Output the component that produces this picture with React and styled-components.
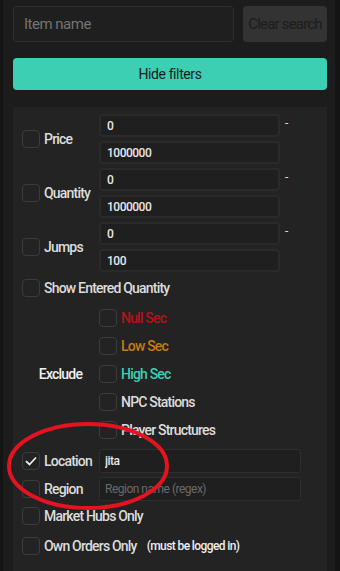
import React from 'react';
import styled, { createGlobalStyle } from 'styled-components';

const GlobalStyle = createGlobalStyle`
  body {
    margin: 0;
    background: #141414;
    font-family: Roboto, "Liberation Sans", sans-serif;
  }
  * { box-sizing: border-box; }
`;

const ranges = [
  { name: 'Price', min: '0', max: '1000000' },
  { name: 'Quantity', min: '0', max: '1000000' },
  { name: 'Jumps', min: '0', max: '100' },
];

const excludes = [
  { name: 'Null Sec', color: '#b3141a' },
  { name: 'Low Sec', color: '#c67a12' },
  { name: 'High Sec', color: '#3ccfb4' },
  { name: 'NPC Stations', color: '#dcdcdc' },
  { name: 'Player Structures', color: '#dcdcdc' },
];

const Check = ({ checked }) => (
  <Box>
    {checked ? (
      <svg width="14" height="14" viewBox="0 0 14 14">
        <path d="M2 7.2 L5.5 10.5 L12 3.5" fill="none" stroke="#eee" strokeWidth="1.8" />
      </svg>
    ) : null}
  </Box>
);

const App = () => {
  return (
    <Page>
      <GlobalStyle />
      <Container>
        <SearchBar>
          <SearchInput placeholder="Item name" />
          <ClearButton>Clear search</ClearButton>
        </SearchBar>
        <FilterButton>Hide filters</FilterButton>
        <Panel>
          {ranges.map((r) => (
            <RangeRow key={r.name}>
              <LabelCell>
                <Check />
                <Label>{r.name}</Label>
              </LabelCell>
              <InputStack>
                <NumInput defaultValue={r.min} />
                <NumInput defaultValue={r.max} />
              </InputStack>
              <Dash>-</Dash>
            </RangeRow>
          ))}
          <CheckRow $top={7}>
            <Check />
            <Label>Show Entered Quantity</Label>
          </CheckRow>
          <ExcludeBlock>
            <ExcludeLabel>Exclude</ExcludeLabel>
            <ExcludeList>
              {excludes.map((e) => (
                <CheckRow key={e.name}>
                  <Check />
                  <Label $color={e.color}>{e.name}</Label>
                </CheckRow>
              ))}
            </ExcludeList>
          </ExcludeBlock>
          <TextRow $top={10}>
            <LabelCell>
              <Check checked />
              <Label>Location</Label>
            </LabelCell>
            <TextInput defaultValue="jita" />
          </TextRow>
          <TextRow $top={4}>
            <LabelCell>
              <Check />
              <Label>Region</Label>
            </LabelCell>
            <TextInput placeholder="Region name (regex)" />
          </TextRow>
          <CheckRow $top={6}>
            <Check />
            <Label>Market Hubs Only</Label>
          </CheckRow>
          <CheckRow $top={12}>
            <Check />
            <Label>Own Orders Only</Label>
            <Note>(must be logged in)</Note>
          </CheckRow>
        </Panel>
      </Container>
      <Annotation width="340" height="571" viewBox="0 0 340 571">
        <ellipse cx="88" cy="466" rx="79" ry="42" fill="none" stroke="#e5121f" strokeWidth="4" />
      </Annotation>
    </Page>
  );
};

export default App;

const Page = styled.div`
  position: relative;
  width: 340px;
  height: 571px;
  overflow: hidden;
`;
const Container = styled.div`
  margin-left: 3px;
  width: 332px;
  height: 571px;
  padding: 6px 8px 0 10px;
  background: #1c1c1c;
  display: flex;
  flex-direction: column;
`;
const SearchBar = styled.div`
  display: flex;
  gap: 9px;
  height: 36px;
`;
const SearchInput = styled.input`
  flex: 1;
  height: 36px;
  padding: 0 10px;
  background: #1f1f1f;
  border: 1px solid #2e2e2e;
  border-radius: 4px;
  color: #ddd;
  font-family: Roboto, sans-serif;
  font-size: 15px;
  letter-spacing: -0.5px;
  outline: none;
  &::placeholder {
    color: #747474;
  }
`;
const ClearButton = styled.button`
  width: 85px;
  height: 36px;
  background: #333;
  border: none;
  border-radius: 4px;
  color: #1c1c1c;
  font-family: Roboto, sans-serif;
  font-size: 15px;
  letter-spacing: -0.8px;
  padding: 0;
`;
const FilterButton = styled.button`
  margin-top: 16px;
  height: 32px;
  background: #3ccfb4;
  border: none;
  border-radius: 4px;
  color: #1a1a1a;
  font-family: Roboto, sans-serif;
  font-size: 14px;
  letter-spacing: -0.4px;
`;
const Panel = styled.div`
  margin-top: 17px;
  flex: 1;
  background: #232323;
  padding: 7px 9px 0;
  display: flex;
  flex-direction: column;
`;
const RangeRow = styled.div`
  display: flex;
  align-items: center;
  & + & {
    margin-top: 4px;
  }
`;
const LabelCell = styled.div`
  width: 77px;
  display: flex;
  align-items: center;
  gap: 4px;
`;
const Box = styled.span`
  width: 18px;
  height: 18px;
  flex: none;
  border: 1px solid #3c3c3c;
  border-radius: 4px;
  display: flex;
  align-items: center;
  justify-content: center;
`;
const Label = styled.span`
  color: ${({ $color }) => $color || '#dcdcdc'};
  font-size: 14px;
  font-weight: 500;
  letter-spacing: -0.8px;
  white-space: nowrap;
`;
const InputStack = styled.div`
  width: 181px;
  display: flex;
  flex-direction: column;
  gap: 4px;
`;
const NumInput = styled.input`
  height: 23px;
  padding: 0 6px;
  background: #1f1f1f;
  border: 2px solid #2a2a2a;
  border-radius: 4px;
  color: #e8e8e8;
  font-family: Roboto, sans-serif;
  font-size: 12px;
  font-weight: 500;
  letter-spacing: -0.5px;
  outline: none;
`;
const Dash = styled.span`
  align-self: flex-start;
  margin: 2px 0 0 5px;
  color: #ddd;
  font-size: 12px;
`;
const CheckRow = styled.div`
  display: flex;
  align-items: center;
  gap: 4px;
  height: 18px;
  margin-top: ${({ $top }) => ($top ? `${$top}px` : 0)};
`;
const ExcludeBlock = styled.div`
  margin-top: 12px;
  display: flex;
  align-items: center;
`;
const ExcludeLabel = styled.span`
  width: 77px;
  text-align: center;
  color: #f0f0f0;
  font-size: 14px;
  font-weight: 500;
  letter-spacing: -0.8px;
`;
const ExcludeList = styled.div`
  display: flex;
  flex-direction: column;
  gap: 10px;
`;
const TextRow = styled.div`
  display: flex;
  align-items: center;
  margin-top: ${({ $top }) => `${$top}px`};
`;
const TextInput = styled.input`
  width: 202px;
  height: 24px;
  padding: 0 5px;
  background: #1f1f1f;
  border: 1px solid #2e2e2e;
  border-radius: 3px;
  color: #e8e8e8;
  font-family: Roboto, sans-serif;
  font-size: 12px;
  font-weight: 500;
  letter-spacing: -0.5px;
  outline: none;
  &::placeholder {
    color: #6a6a6a;
    font-weight: 400;
  }
`;
const Note = styled.span`
  margin-left: 6px;
  color: #eee;
  font-size: 12px;
  font-weight: 500;
  letter-spacing: -0.6px;
`;
const Annotation = styled.svg`
  position: absolute;
  left: 0;
  top: 0;
  pointer-events: none;
`;
